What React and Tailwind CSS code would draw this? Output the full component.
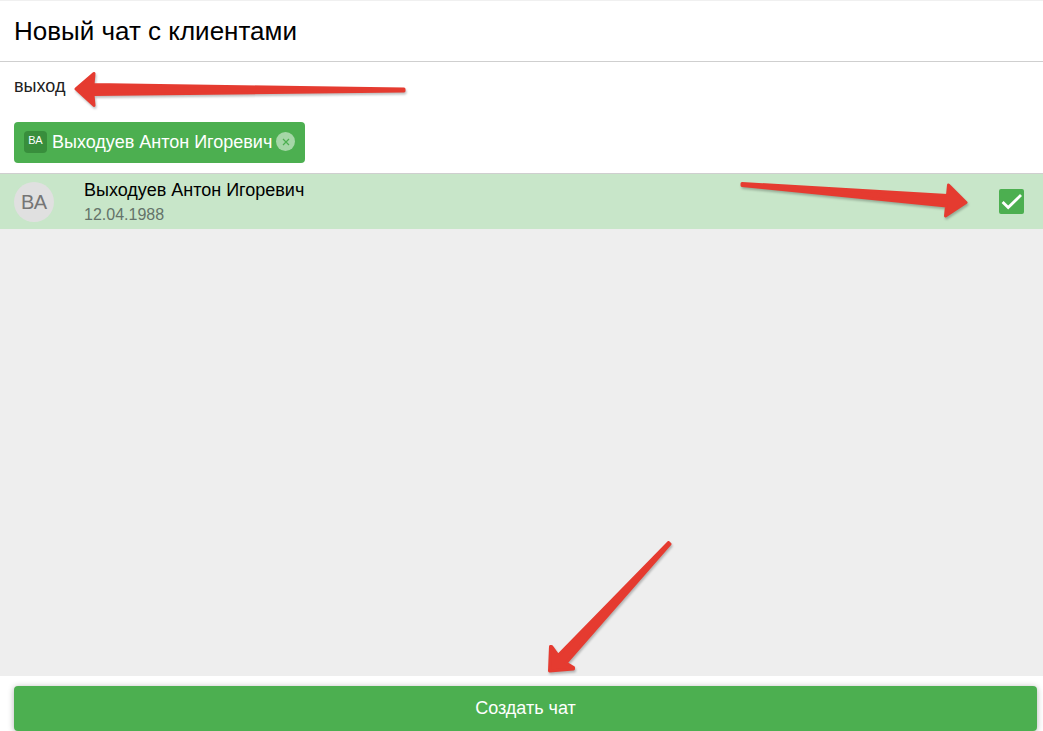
import { useState } from 'react';

const CLIENTS = [
  { id: 1, name: 'Выходуев Антон Игоревич', initials: 'ВА', birthday: '12.04.1988' },
];

function Arrow({ viewBox, path, className }) {
  return (
    <svg
      viewBox={viewBox}
      aria-hidden="true"
      className={`pointer-events-none absolute z-10 overflow-visible drop-shadow-[1px_2px_1px_rgba(0,0,0,0.25)] ${className}`}
    >
      <path d={path} fill="#e53b30" stroke="#e53b30" strokeWidth="3" strokeLinejoin="round" />
    </svg>
  );
}

function ClientChip({ client, onRemove }) {
  return (
    <div className="flex h-[41px] items-center rounded bg-[#4caf50] px-2.5 pb-0.5 text-white">
      <span className="mr-[5px] flex h-[22px] w-[23px] items-center justify-center rounded bg-[#388e3c] pb-0.5 text-[11px] font-medium">
        {client.initials}
      </span>
      <span className="text-lg">{client.name}</span>
      <button
        type="button"
        aria-label="Удалить"
        onClick={onRemove}
        className="ml-1 flex size-[19px] items-center justify-center rounded-full bg-[#a5d7a7] text-[#4caf50]"
      >
        <svg viewBox="0 0 8 8" className="size-2" stroke="currentColor" strokeWidth="1.2">
          <path d="M1 1l6 6M7 1L1 7" />
        </svg>
      </button>
    </div>
  );
}

function ClientRow({ client, checked, onToggle }) {
  return (
    <li className="relative">
      <label className={`flex h-[55px] items-center pr-[19px] pl-3.5 ${checked ? 'bg-[#c8e6c9]' : 'bg-white'}`}>
        <span className="flex size-10 items-center justify-center rounded-full bg-[#e0e0e0] text-xl text-[#757575]">
          {client.initials}
        </span>
        <span className="ml-[30px] flex flex-1 flex-col">
          <span className="text-lg leading-[26px] text-black">{client.name}</span>
          <span className="text-base leading-6 text-[#64736a]">{client.birthday}</span>
        </span>
        <span className="relative size-[25px]">
          <input
            type="checkbox"
            checked={checked}
            onChange={onToggle}
            className="block size-full appearance-none rounded-xs border-2 border-[#4caf50] checked:bg-[#4caf50]"
          />
          {checked && (
            <svg
              viewBox="0 0 25 25"
              fill="none"
              stroke="white"
              strokeWidth="2.8"
              className="pointer-events-none absolute inset-0"
            >
              <path d="M3.600 13l5.600 5.600L22 6" />
            </svg>
          )}
        </span>
      </label>
      <Arrow
        viewBox="0 0 228 36"
        className="top-2 right-[75px] h-9 w-[228px]"
        path="M2 1.500L207.500 13.500L208.500 3L226 20.500L205.500 34L206.500 24L2 3.500Z"
      />
    </li>
  );
}

export default function App() {
  const [query, setQuery] = useState('выход');
  const [selected, setSelected] = useState([1]);

  const toggle = (id) => {
    setSelected((prev) => (prev.includes(id) ? prev.filter((x) => x !== id) : [...prev, id]));
  };

  const visible = CLIENTS.filter((c) => c.name.toLowerCase().includes(query.toLowerCase()));
  const chips = CLIENTS.filter((c) => selected.includes(c.id));

  return (
    <div className="flex h-screen flex-col bg-white font-['Liberation_Sans',Arial,sans-serif]">
      <header className="flex h-[62px] shrink-0 items-center border-t border-b border-t-[#f0f0f0] border-b-[#cfcfcf] px-3.5">
        <h1 className="text-[26px] text-black">Новый чат с клиентами</h1>
      </header>

      <section className="relative shrink-0 border-b border-[#cfcfcf] pb-2.5">
        <input
          type="text"
          aria-label="Поиск клиента"
          value={query}
          onChange={(e) => setQuery(e.target.value)}
          className="block h-12 w-full px-3.5 text-lg text-[#212121] outline-none"
        />
        <div className="mt-3 flex flex-wrap gap-2 px-3.5">
          {chips.map((client) => (
            <ClientChip key={client.id} client={client} onRemove={() => toggle(client.id)} />
          ))}
        </div>
        <Arrow
          viewBox="0 0 334 38"
          className="top-2 left-[73px] h-[38px] w-[334px]"
          path="M3 19L21 3.500L20 14.500L331 19L331 21L20 24.500L21 35.500Z"
        />
      </section>

      <main className="min-h-0 flex-1 overflow-y-auto bg-[#eee]">
        <ul>
          {visible.map((client) => (
            <ClientRow
              key={client.id}
              client={client}
              checked={selected.includes(client.id)}
              onToggle={() => toggle(client.id)}
            />
          ))}
        </ul>
      </main>

      <footer className="relative shrink-0 pt-2.5 pr-1.5 pl-3.5">
        <button
          type="button"
          className="h-[45px] w-full rounded bg-[#4caf50] pb-0.5 text-lg text-white shadow-[0_1px_6px_rgba(0,0,0,0.3)]"
        >
          Создать чат
        </button>
        <Arrow
          viewBox="0 0 126 134"
          className="bottom-[57px] left-1/2 ml-6 h-[134px] w-[126px]"
          path="M3.500 131L4.500 106.500L5.500 106.500L12 115.500L122.500 2.500L124 4L20 123L27.500 127.500L27.500 129Z"
        />
      </footer>
    </div>
  );
}
